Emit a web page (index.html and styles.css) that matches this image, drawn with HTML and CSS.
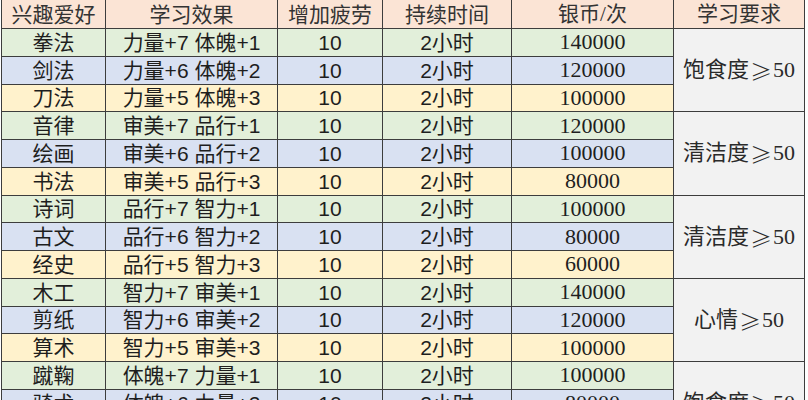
FILE: index.html
```html
<!DOCTYPE html>
<html lang="zh">
<head>
<meta charset="utf-8">
<link rel="stylesheet" href="styles.css">
</head>
<body>
<div class="sheet">
  <div class="c h">兴趣爱好</div>
  <div class="c h">学习效果</div>
  <div class="c h">增加疲劳</div>
  <div class="c h">持续时间</div>
  <div class="c h serif">银币/次</div>
  <div class="c h serif">学习要求</div>

  <div class="c g">拳法</div><div class="c g">力量+7 体魄+1</div><div class="c g">10</div><div class="c g">2小时</div><div class="c g num">140000</div>
  <div class="c req serif">饱食度<span class="ge">≥</span>50</div>
  <div class="c b">剑法</div><div class="c b">力量+6 体魄+2</div><div class="c b">10</div><div class="c b">2小时</div><div class="c b num">120000</div>
  <div class="c y">刀法</div><div class="c y">力量+5 体魄+3</div><div class="c y">10</div><div class="c y">2小时</div><div class="c y num">100000</div>

  <div class="c g">音律</div><div class="c g">审美+7 品行+1</div><div class="c g">10</div><div class="c g">2小时</div><div class="c g num">120000</div>
  <div class="c req serif">清洁度<span class="ge">≥</span>50</div>
  <div class="c b">绘画</div><div class="c b">审美+6 品行+2</div><div class="c b">10</div><div class="c b">2小时</div><div class="c b num">100000</div>
  <div class="c y">书法</div><div class="c y">审美+5 品行+3</div><div class="c y">10</div><div class="c y">2小时</div><div class="c y num">80000</div>

  <div class="c g">诗词</div><div class="c g">品行+7 智力+1</div><div class="c g">10</div><div class="c g">2小时</div><div class="c g num">100000</div>
  <div class="c req serif">清洁度<span class="ge">≥</span>50</div>
  <div class="c b">古文</div><div class="c b">品行+6 智力+2</div><div class="c b">10</div><div class="c b">2小时</div><div class="c b num">80000</div>
  <div class="c y">经史</div><div class="c y">品行+5 智力+3</div><div class="c y">10</div><div class="c y">2小时</div><div class="c y num">60000</div>

  <div class="c g">木工</div><div class="c g">智力+7 审美+1</div><div class="c g">10</div><div class="c g">2小时</div><div class="c g num">140000</div>
  <div class="c req serif">心情<span class="ge">≥</span>50</div>
  <div class="c b">剪纸</div><div class="c b">智力+6 审美+2</div><div class="c b">10</div><div class="c b">2小时</div><div class="c b num">120000</div>
  <div class="c y">算术</div><div class="c y">智力+5 审美+3</div><div class="c y">10</div><div class="c y">2小时</div><div class="c y num">100000</div>

  <div class="c g">蹴鞠</div><div class="c g">体魄+7 力量+1</div><div class="c g">10</div><div class="c g">2小时</div><div class="c g num">100000</div>
  <div class="c req serif">饱食度<span class="ge">≥</span>50</div>
  <div class="c b">骑术</div><div class="c b">体魄+6 力量+2</div><div class="c b">10</div><div class="c b">2小时</div><div class="c b num">80000</div>
  <div class="c y">射箭</div><div class="c y">体魄+5 力量+3</div><div class="c y">10</div><div class="c y">2小时</div><div class="c y num">60000</div>
</div>
</body>
</html>
```
FILE: styles.css
```css
html, body {
  margin: 0;
  padding: 0;
  background: #ffffff;
  overflow: hidden;
}
body {
  padding-left: 1px;
}
.sheet {
  display: grid;
  grid-template-columns: 103px 171px 104px 128px 161px 130px;
  grid-template-rows: 28px repeat(15, 26.75px);
  gap: 1px;
  padding: 0 1px 1px 1px;
  width: max-content;
  background: #3d3d3d;
  font-family: "Liberation Sans", "Noto Sans CJK SC", sans-serif;
  font-size: 21px;
  color: #1e1e1e;
}
.c {
  display: flex;
  align-items: center;
  justify-content: center;
  white-space: pre;
  line-height: 1;
}
.h {
  background: #fbe4d5;
  color: #333333;
}
.g { background: #e2efda; }
.b { background: #d9e1f2; }
.y { background: #fff2cc; }
.num {
  font-family: "Liberation Serif", "Noto Sans CJK SC", serif;
  font-size: 22px;
}
.serif {
  font-family: "Liberation Serif", "Noto Sans CJK SC", serif;
}
.req {
  grid-column: 6;
  grid-row: span 3;
  background: #f2f2f2;
  color: #2a2a2a;
  font-size: 22px;
}
.ge {
  font-family: "Noto Sans CJK SC", sans-serif;
  font-weight: 300;
  padding: 0 1px;
}
```
